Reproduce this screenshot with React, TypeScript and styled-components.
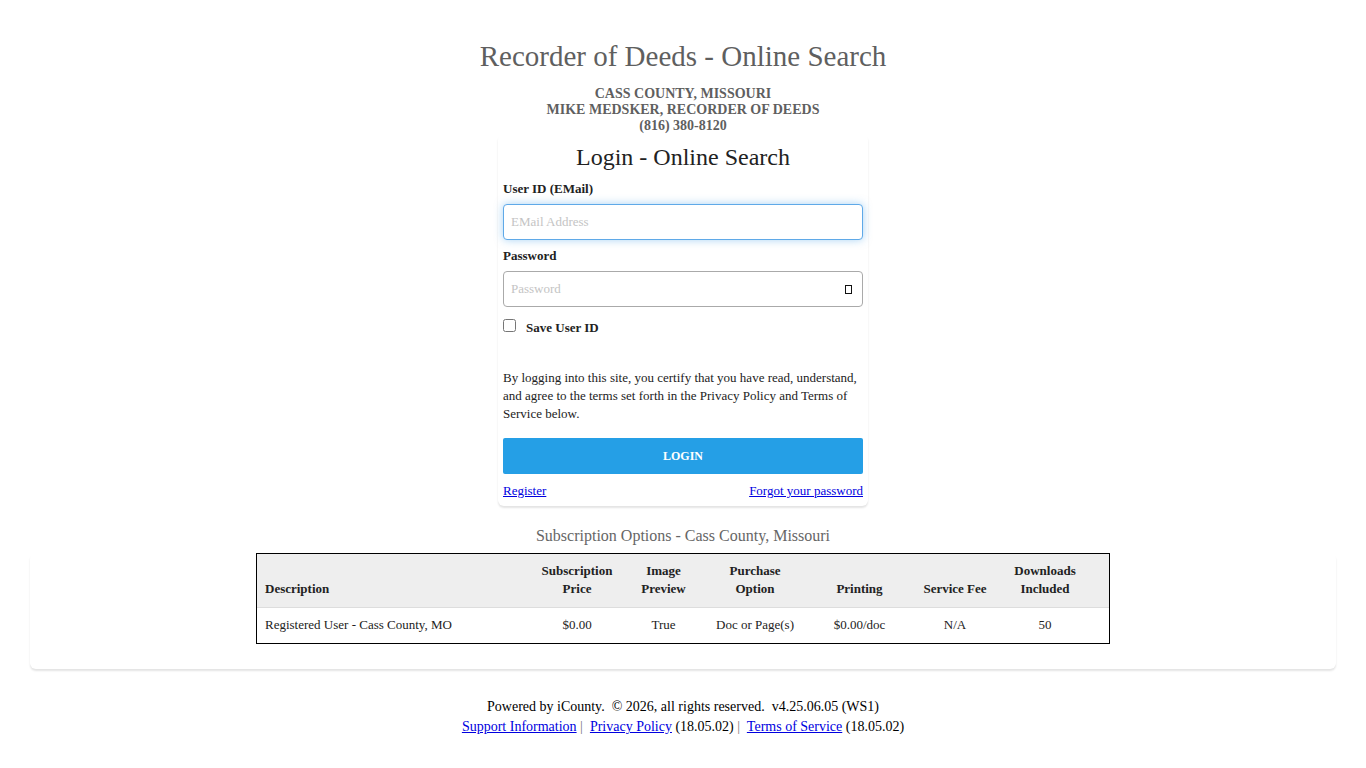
import React from "react";
import styled, { createGlobalStyle } from "styled-components";

const GlobalStyle = createGlobalStyle`
  *, *::before, *::after { box-sizing: border-box; }
  body {
    margin: 0;
    background: #fff;
    color: #222;
    font-family: "Liberation Serif", "Times New Roman", serif;
    font-size: 13px;
    line-height: 18px;
  }
`;

const Page = styled.div`
  display: flex;
  flex-direction: column;
  align-items: center;
  padding: 36px 30px 30px;
`;

const PageTitle = styled.h1`
  margin: 0 0 10px;
  color: #5f5f5f;
  font-size: 29px;
  font-weight: 400;
  line-height: 40px;
  text-align: center;
`;

const OfficeInfo = styled.address`
  color: #5f5f5f;
  font-size: 14px;
  font-style: normal;
  font-weight: 700;
  line-height: 16px;
  text-align: center;
`;

const Card = styled.section`
  background: #fff;
  border-radius: 6px;
  box-shadow: 0 2px 2px rgba(0, 0, 0, 0.11);
  clip-path: inset(0 -6px -6px -6px);
`;

const LoginCard = styled(Card)`
  width: 100%;
  max-width: 370px;
  padding: 7px 5px 6px;
`;

const LoginForm = styled.form`
  display: flex;
  flex-direction: column;
`;

const LoginTitle = styled.h2`
  margin: 0 0 7px;
  font-size: 24px;
  font-weight: 400;
  line-height: 32px;
  text-align: center;
`;

const FieldLabel = styled.label`
  font-weight: 700;
  margin-bottom: 6px;
`;

const TextField = styled.input<{ $active?: boolean }>`
  flex: 1;
  min-width: 0;
  width: 100%;
  height: 36px;
  padding: 0 7px;
  border: 1px solid ${(p) => (p.$active ? "#5fa9e8" : "#aaa")};
  border-radius: 4px;
  outline: none;
  background: #fff;
  color: #222;
  font: inherit;
  box-shadow: ${(p) => (p.$active ? "0 0 8px rgba(82, 168, 236, 0.5)" : "none")};
  &::placeholder { color: #c4c4c4; opacity: 1; }
`;

const FieldRow = styled.div`
  display: flex;
  position: relative;
  margin-bottom: 7px;
`;

const RevealButton = styled.button`
  position: absolute;
  top: 0;
  right: 0;
  width: 30px;
  height: 36px;
  padding: 0;
  border: 0;
  background: none;
  display: flex;
  align-items: center;
  justify-content: center;
  cursor: pointer;
`;

const RevealIcon = styled.span`
  width: 7px;
  height: 9px;
  border: 1px solid #111;
`;

const SaveRow = styled.label`
  display: flex;
  align-items: flex-start;
  gap: 10px;
  margin: 5px 0 32px;
  font-weight: 700;
`;

const CheckBox = styled.input`
  width: 13px;
  height: 13px;
  margin: 0;
`;

const Terms = styled.p`
  margin: 0 0 15px;
`;

const LoginButton = styled.button`
  height: 36px;
  border: 0;
  border-radius: 2px;
  background: #259fe6;
  color: #fff;
  font: inherit;
  font-size: 12px;
  font-weight: 700;
  cursor: pointer;
`;

const LinkRow = styled.nav`
  display: flex;
  justify-content: space-between;
  margin-top: 8px;
`;

const Link = styled.a`
  color: #0000e0;
  text-decoration: underline;
`;

const OptionsTitle = styled.h2`
  margin: 20px 0 7px;
  color: #666;
  font-size: 16px;
  font-weight: 400;
  line-height: 20px;
  text-align: center;
`;

const OptionsCard = styled(Card)`
  width: 100%;
  padding-bottom: 25px;
`;

const OptionsTable = styled.table`
  width: 100%;
  max-width: 854px;
  margin: 0 auto;
  border: 1px solid #000;
  border-spacing: 0;
  table-layout: fixed;
`;

const Column = styled.col<{ $width?: number }>`
  width: ${(p) => (p.$width ? `${p.$width}px` : "auto")};
`;

const HeadCell = styled.th<{ $left?: boolean }>`
  padding: 8px 8px 9px;
  border-bottom: 1px solid #ddd;
  background: #eee;
  text-align: ${(p) => (p.$left ? "left" : "center")};
  vertical-align: bottom;
`;

const Cell = styled.td<{ $left?: boolean }>`
  padding: 8px 8px 9px;
  text-align: ${(p) => (p.$left ? "left" : "center")};
`;

const Footer = styled.footer`
  margin-top: 28px;
  color: #000;
  font-size: 14px;
  line-height: 20px;
  text-align: center;
`;

const Divider = styled.span`
  color: #777;
`;

export default function App() {
  return (
    <>
      <GlobalStyle />
      <Page>
        <PageTitle>Recorder of Deeds - Online Search</PageTitle>
        <OfficeInfo>
          CASS COUNTY, MISSOURI
          <br />
          MIKE MEDSKER, RECORDER OF DEEDS
          <br />
          (816) 380-8120
        </OfficeInfo>

        <LoginCard>
          <LoginForm onSubmit={(e) => e.preventDefault()}>
            <LoginTitle>Login - Online Search</LoginTitle>
            <FieldLabel htmlFor="email">User ID (EMail)</FieldLabel>
            <FieldRow>
              <TextField id="email" type="email" placeholder="EMail Address" $active />
            </FieldRow>
            <FieldLabel htmlFor="password">Password</FieldLabel>
            <FieldRow>
              <TextField id="password" type="password" placeholder="Password" />
              <RevealButton type="button" aria-label="Show password">
                <RevealIcon />
              </RevealButton>
            </FieldRow>
            <SaveRow htmlFor="save">
              <CheckBox id="save" type="checkbox" />
              Save User ID
            </SaveRow>
            <Terms>
              By logging into this site, you certify that you have read, understand, and agree to
              the terms set forth in the Privacy Policy and Terms of Service below.
            </Terms>
            <LoginButton type="submit">LOGIN</LoginButton>
            <LinkRow>
              <Link href="#register">Register</Link>
              <Link href="#forgot">Forgot your password</Link>
            </LinkRow>
          </LoginForm>
        </LoginCard>

        <OptionsTitle>Subscription Options - Cass County, Missouri</OptionsTitle>
        <OptionsCard>
          <OptionsTable>
            <colgroup>
              <Column />
              <Column $width={88} />
              <Column $width={85} />
              <Column $width={98} />
              <Column $width={111} />
              <Column $width={80} />
              <Column $width={100} />
              <Column $width={14} />
            </colgroup>
            <thead>
              <tr>
                <HeadCell $left>Description</HeadCell>
                <HeadCell>Subscription Price</HeadCell>
                <HeadCell>Image Preview</HeadCell>
                <HeadCell>Purchase Option</HeadCell>
                <HeadCell>Printing</HeadCell>
                <HeadCell>Service Fee</HeadCell>
                <HeadCell>Downloads Included</HeadCell>
                <HeadCell />
              </tr>
            </thead>
            <tbody>
              <tr>
                <Cell $left>Registered User - Cass County, MO</Cell>
                <Cell>$0.00</Cell>
                <Cell>True</Cell>
                <Cell>Doc or Page(s)</Cell>
                <Cell>$0.00/doc</Cell>
                <Cell>N/A</Cell>
                <Cell>50</Cell>
                <Cell />
              </tr>
            </tbody>
          </OptionsTable>
        </OptionsCard>

        <Footer>
          Powered by iCounty.&nbsp; © 2026, all rights reserved.&nbsp; v4.25.06.05 (WS1)
          <br />
          <Link href="#support">Support Information</Link> <Divider>|</Divider>&nbsp;{" "}
          <Link href="#privacy">Privacy Policy</Link> (18.05.02) <Divider>|</Divider>&nbsp;{" "}
          <Link href="#terms">Terms of Service</Link> (18.05.02)
        </Footer>
      </Page>
    </>
  );
}
